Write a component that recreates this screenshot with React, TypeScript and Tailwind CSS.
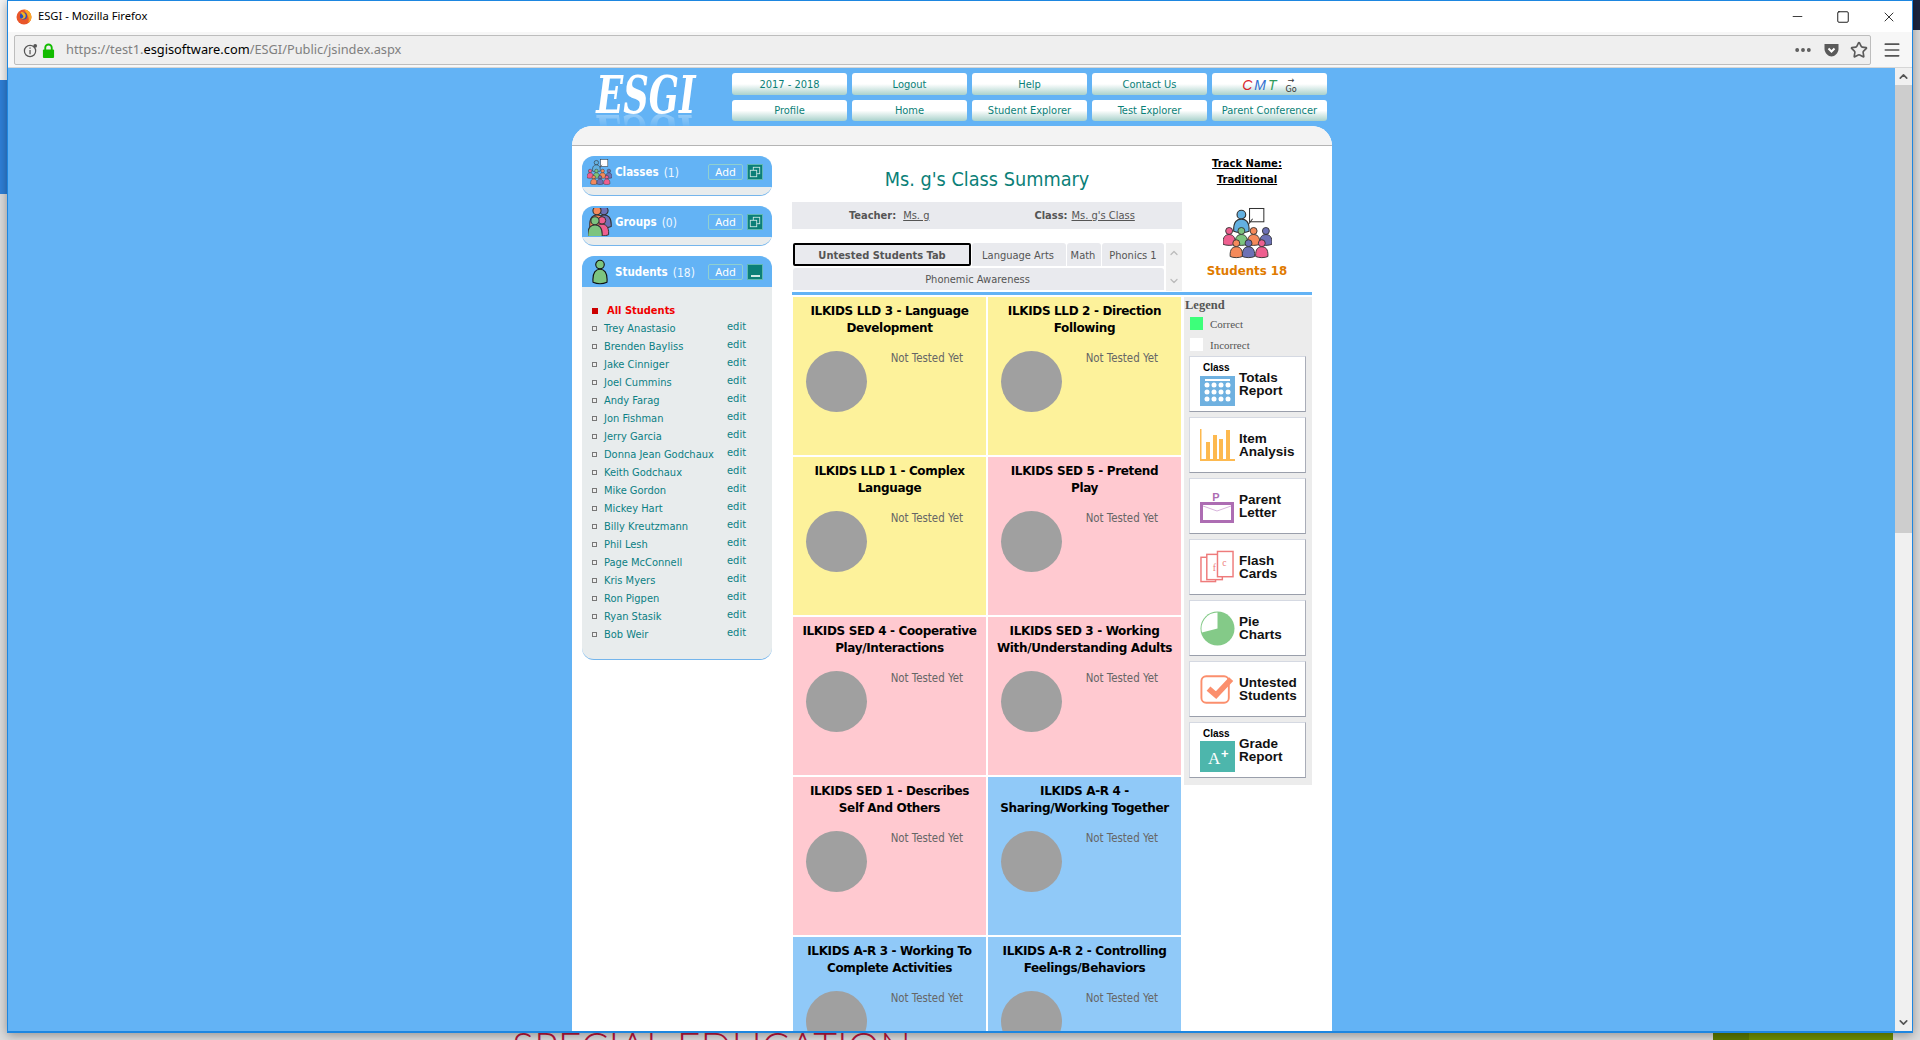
import { Minus, Square, X, MoreHorizontal, Star, Menu, ChevronUp, ChevronDown } from 'lucide-react';

const topButtons = ['2017 - 2018', 'Logout', 'Help', 'Contact Us', 'CMT', 'Profile', 'Home', 'Student Explorer', 'Test Explorer', 'Parent Conferencer'];

const students = [
  'Trey Anastasio', 'Brenden Bayliss', 'Jake Cinniger', 'Joel Cummins', 'Andy Farag', 'Jon Fishman', 'Jerry Garcia',
  'Donna Jean Godchaux', 'Keith Godchaux', 'Mike Gordon', 'Mickey Hart', 'Billy Kreutzmann', 'Phil Lesh', 'Page McConnell',
  'Kris Myers', 'Ron Pigpen', 'Ryan Stasik', 'Bob Weir',
];

const cards = [
  { title: 'ILKIDS LLD 3 - Language Development', color: 'bg-[#fdf29b]' },
  { title: 'ILKIDS LLD 2 - Direction Following', color: 'bg-[#fdf29b]' },
  { title: 'ILKIDS LLD 1 - Complex Language', color: 'bg-[#fdf29b]' },
  { title: 'ILKIDS SED 5 - Pretend\nPlay', color: 'bg-[#ffc9d0]' },
  { title: 'ILKIDS SED 4 - Cooperative Play/Interactions', color: 'bg-[#ffc9d0]' },
  { title: 'ILKIDS SED 3 - Working With/Understanding Adults', color: 'bg-[#ffc9d0]' },
  { title: 'ILKIDS SED 1 - Describes Self And Others', color: 'bg-[#ffc9d0]' },
  { title: 'ILKIDS A-R 4 - Sharing/Working Together', color: 'bg-[#90c9f8]' },
  { title: 'ILKIDS A-R 3 - Working To Complete Activities', color: 'bg-[#90c9f8]' },
  { title: 'ILKIDS A-R 2 - Controlling Feelings/Behaviors', color: 'bg-[#90c9f8]' },
];

function Person({ x, y, s = 1, fill }: { x: number; y: number; s?: number; fill: string }) {
  return (
    <g transform={`translate(${x} ${y}) scale(${s})`} fill={fill} stroke="#333" strokeWidth={0.9}>
      <circle cx={0} cy={-6} r={3.4} />
      <path d="M-6 7 C-6.5 -1 -3 -2.5 0 -2.5 C3 -2.5 6.5 -1 6 7 C3 8.5 -3 8.5 -6 7 Z" />
    </g>
  );
}

function ClassIcon({ className }: { className: string }) {
  return (
    <svg viewBox="0 0 48 50" className={className}>
      <rect x={26} y={1} width={14} height={13} fill="#fff" stroke="#333" />
      <path d="M23 19 L29 11" stroke="#333" />
      <Person x={18} y={14.5} s={1.25} fill="#63b0e0" />
      <Person x={18} y={29} fill="#7cc47f" />
      <Person x={6} y={29} fill="#ee5f8f" />
      <Person x={30} y={29} fill="#f58a5b" />
      <Person x={42} y={29} fill="#6c71b5" />
      <Person x={13} y={41} fill="#f58a5b" />
      <Person x={25} y={41} fill="#6c71b5" />
      <Person x={38} y={41} fill="#ee5f8f" />
    </svg>
  );
}

function GroupIcon({ className }: { className: string }) {
  return (
    <svg viewBox="0 0 24 28" className={className}>
      <Person x={16} y={10} s={1.2} fill="#6c71b5" />
      <Person x={9} y={10} s={1.2} fill="#f58a5b" />
      <Person x={14} y={19} s={1.1} fill="#ee5f8f" />
      <Person x={7} y={20} s={1.2} fill="#7cc47f" />
    </svg>
  );
}

function StudentIcon({ className }: { className: string }) {
  return (
    <svg viewBox="0 0 18 28" className={className}>
      <g fill="#7cc47f" stroke="#111" strokeWidth={1.2}>
        <circle cx={9} cy={6} r={4.6} />
        <path d="M1.5 25 C0.5 14 5 11 9 11 C13 11 17.5 14 16.5 25 C12 27 6 27 1.5 25 Z" />
      </g>
    </svg>
  );
}

function CopyGlyph({ open }: { open: boolean }) {
  return (
    <div className="w-[16px] h-[16px] bg-[#0b7f78] border border-[#5fb8b0] flex items-center justify-center">
      {open ? (
        <svg viewBox="0 0 14 14" className="w-[12px] h-[12px]" fill="none" stroke="#cfe9e6" strokeWidth={1}>
          <rect x={5} y={1.5} width={7.5} height={7.5} />
          <rect x={1.5} y={5} width={7.5} height={7.5} fill="#0b7f78" />
        </svg>
      ) : (
        <div className="w-[9px] h-[2px] bg-[#cfe9e6] mt-[9px]" />
      )}
    </div>
  );
}

function PanelHeader({ icon, label, count, open }: { icon: React.ReactNode; label: string; count: number; open: boolean }) {
  return (
    <div className="h-[31px] bg-[#63b3f5] rounded-t-[12px] flex items-center font-['DejaVu_Sans_Condensed','DejaVu_Sans',sans-serif]">
      <div className="w-[33px] flex justify-center pl-[2px]">{icon}</div>
      <span className="text-white font-bold text-[11.5px] pt-[2px]">{label}</span>
      <span className="text-[#eef7ff] text-[12px] ml-[5px] pt-[2px]">({count})</span>
      <div className="ml-auto mr-[9px] flex items-center gap-[4px]">
        <span className="w-[35px] h-[16px] border border-[#8fd0d0] rounded-[2px] text-white text-[11px] leading-[14px] text-center font-['Noto_Sans',sans-serif]">Add</span>
        <CopyGlyph open={open} />
      </div>
    </div>
  );
}

function ReportCard({ icon, top, label }: { icon: React.ReactNode; top?: string; label: string[] }) {
  return (
    <div className="relative w-[117px] h-[56px] bg-white border border-[#d5d9e2] border-b-[#9a9fab] border-r-[#a9adb8] flex items-center pl-[9px] gap-[4px]">
      {top && <span className="absolute left-[13px] top-[5px] text-[10px] leading-[12px] font-bold text-black font-['Liberation_Sans',sans-serif]">{top}</span>}
      <div className={`w-[36px] flex justify-center ${top ? 'mt-[13px]' : ''}`}>{icon}</div>
      <div className="text-[13.5px] leading-[12.5px] pt-[1px] font-bold text-[#111] font-['Liberation_Sans',sans-serif]">
        {label.map((l) => (
          <div key={l}>{l}</div>
        ))}
      </div>
    </div>
  );
}

function FirefoxLogo() {
  return (
    <svg viewBox="0 0 16 16" className="w-[16px] h-[16px]">
      <circle cx={8} cy={8} r={7.5} fill="#e9562a" />
      <path d="M8 .5 A7.5 7.5 0 0 1 15.5 8 A7.5 7.5 0 0 1 12 14 C14 10 12 6 8 .5Z" fill="#f9a825" />
      <circle cx={7.5} cy={7} r={3.6} fill="#2b4fb8" />
      <path d="M5 3 C8 3 10.5 5 9.5 8 C9 10 6 10.5 4.5 9.5 C7 9.5 8 8 7 6.5 C6.5 5.6 5 5 5 3Z" fill="#f7b21c" />
    </svg>
  );
}

export default function App() {
  return (
    <div className="relative w-[1920px] h-[1040px] overflow-hidden bg-[#dcdcdc]">
      {/* desktop behind the window */}
      <div className="absolute left-0 top-0 w-[7px] h-[80px] bg-[#f4f4f4]" />
      <div className="absolute left-0 top-[80px] w-[7px] h-[114px] bg-[#2f80d8]" />
      <div className="absolute left-[1912px] top-0 w-[8px] h-[30px] bg-[#1d2540]" />
      <div className="absolute left-[1713px] top-[1033px] w-[180px] h-[7px] bg-[#6f8f00]" />
      <div className="absolute left-[1713px] top-[1033px] w-[36px] h-[7px] bg-[#5c7a00]" />
      <div className="absolute left-[512px] top-[1025px] text-[#b8163c] text-[41px] leading-[44px] font-light font-['Lato',sans-serif] whitespace-nowrap">
        SPECIAL EDUCATION
      </div>

      {/* browser window */}
      <div className="absolute left-[7px] top-0 w-[1906px] h-[1033px] bg-white border-x border-t border-b-2 border-[#1d86e0] shadow-[0_2px_10px_rgba(0,0,0,0.35)] flex flex-col overflow-hidden">
        <div className="h-[31px] flex items-center pl-[8px] bg-white shrink-0">
          <FirefoxLogo />
          <span className="ml-[6px] text-[11.2px] text-black font-['Noto_Sans',sans-serif]">ESGI - Mozilla Firefox</span>
          <div className="ml-auto flex items-center text-black">
            <div className="w-[46px] flex justify-center"><Minus size={15} strokeWidth={1.2} /></div>
            <div className="w-[46px] flex justify-center"><Square size={14} strokeWidth={1.5} /></div>
            <div className="w-[46px] flex justify-center"><X size={16} strokeWidth={1.2} /></div>
          </div>
        </div>

        <div className="h-[36px] bg-[#f7f7f7] border-b border-[#d6d6d6] flex items-center pl-[6px] pr-[10px] pt-[1px] shrink-0">
          <div className="flex-1 h-[30px] bg-[#efefef] border border-[#bdbdbd] rounded-[2px] flex items-center pl-[8px] pr-[2px]">
            <svg viewBox="0 0 16 16" className="w-[15px] h-[15px]" fill="none" stroke="#555" strokeWidth={1.3}>
              <circle cx={7.5} cy={8.5} r={6} />
              <path d="M7.5 7.5 V12 M7.5 4.8 V6" />
              <circle cx={13} cy={3} r={2} fill="#555" stroke="none" />
            </svg>
            <svg viewBox="0 0 14 16" className="w-[13px] h-[15px] ml-[4px]" fill="none">
              <path d="M3.5 8 V5 A3.5 3.5 0 0 1 10.5 5 V8" stroke="#12bc00" strokeWidth={2} />
              <rect x={1} y={7} width={12} height={9} rx={1} fill="#12bc00" />
            </svg>
            <span className="ml-[11px] text-[12.8px] text-[#808080] font-['Noto_Sans',sans-serif]">
              https://test1.<span className="text-black">esgisoftware.com</span>/ESGI/Public/jsindex.aspx
            </span>
            <div className="ml-auto flex items-center gap-[10px] text-[#5a5a5a]">
              <MoreHorizontal size={20} strokeWidth={2.6} />
              <svg viewBox="0 0 16 16" className="w-[17px] h-[16px]"><path d="M1 2 H15 V7 C15 11 11 14.5 8 14.5 C5 14.5 1 11 1 7 Z" fill="#5a5a5a" /><path d="M5 6.5 L8 9.5 L11 6.5" stroke="#fff" strokeWidth={2} fill="none" /></svg>
              <Star size={18} strokeWidth={2.2} />
            </div>
          </div>
          <Menu size={20} strokeWidth={2} className="ml-[11px] text-[#555]" />
        </div>

        <div className="flex-1 flex min-h-0">
          {/* page */}
          <div className="flex-1 bg-[#63b3f5] overflow-hidden font-['DejaVu_Sans',sans-serif]">
            <div className="w-[760px] ml-[564px]">
              {/* header */}
              <div className="h-[58px] flex">
                <div className="w-[160px] flex justify-center pr-[12px]">
                  <span className="block h-[48px] text-white text-[52px] leading-[48px] mt-[3px] italic font-bold scale-x-[0.68] font-['DejaVu_Serif',serif] [-webkit-box-reflect:below_-10px_linear-gradient(transparent_60%,rgba(255,255,255,0.45))]">ESGI</span>
                </div>
                <div className="grid grid-cols-5 gap-x-[5px] gap-y-[5px] w-[595px] mt-[5px] h-[48px]">
                  {topButtons.map((b) => (
                    <div key={b} className="rounded-[3px] pt-[2px] bg-gradient-to-b from-white via-white to-[#a9d2cc] flex items-center justify-center text-[11px] text-[#0b7f78] font-['DejaVu_Sans_Condensed','DejaVu_Sans',sans-serif]">
                      {b === 'CMT' ? (
                        <span className="flex items-center gap-[7px]">
                          <span className="italic text-[14px] leading-none tracking-[2px] font-['Liberation_Sans',sans-serif]">
                            <span className="text-[#d8232a]">C</span><span className="text-[#2f6fd0]">M</span><span className="text-[#2e9b5b]">T</span>
                          </span>
                          <span className="text-[#333] text-[9px] leading-[9px] text-center">→<br />Go</span>
                        </span>
                      ) : b}
                    </div>
                  ))}
                </div>
              </div>

              {/* main sheet */}
              <div className="relative bg-white rounded-t-[20px] h-[910px] overflow-hidden">
                <div className="h-[20px] bg-[#f3f3f3] border-b border-[#b4b4b4]" />
                <div className="flex">
                  {/* left column */}
                  <div className="w-[190px] ml-[10px] mt-[10px] flex flex-col gap-[10px]">
                    <div className="h-[40px] bg-[#e8eced] rounded-[12px] border-b border-[#74b5ec]">
                      <PanelHeader icon={<ClassIcon className="w-[25px] h-[26px]" />} label="Classes" count={1} open />
                    </div>
                    <div className="h-[40px] bg-[#e8eced] rounded-[12px] border-b border-[#74b5ec]">
                      <PanelHeader icon={<GroupIcon className="w-[24px] h-[28px]" />} label="Groups" count={0} open />
                    </div>
                    <div className="bg-[#e8eced] rounded-[12px] border-b border-[#74b5ec] h-[404px]">
                      <PanelHeader icon={<StudentIcon className="w-[18px] h-[26px]" />} label="Students" count={18} open={false} />
                      <div className="pl-[10px] pt-[15px]">
                        <div className="flex items-center h-[18px] text-[11px] font-bold text-[#f00000] font-['DejaVu_Sans_Condensed','DejaVu_Sans',sans-serif]">
                          <span className="w-[6px] h-[6px] bg-[#cc0000] mr-[9px]" />All Students
                        </div>
                        {students.map((s) => (
                          <div key={s} className="flex h-[18px] text-[11px] text-[#0b7f84] font-['DejaVu_Sans_Condensed','DejaVu_Sans',sans-serif]">
                            <span className="w-[5px] h-[5px] border border-[#777] bg-[#eee] mr-[7px] mt-[6px] shrink-0" />
                            <span className="w-[123px] whitespace-nowrap leading-[17px]">{s}</span>
                            <span className="leading-[14px]">edit</span>
                          </div>
                        ))}
                      </div>
                    </div>
                  </div>

                  <div className="w-[520px] ml-[20px]">
                    <div className="flex h-[146px]">
                      {/* centre heading and tabs */}
                      <div className="w-[390px]">
                        <div className="h-[56px] flex items-end justify-center pb-[9px] text-[19.7px] leading-[26px] text-[#0b7f78] font-['DejaVu_Sans_Condensed','DejaVu_Sans',sans-serif]">Ms. g's Class Summary</div>
                        <div className="h-[27px] pt-[1px] bg-[#e9eaee] flex items-center text-[11px] text-[#555] font-['DejaVu_Sans_Condensed','DejaVu_Sans',sans-serif]">
                          <span className="font-bold ml-[57px]">Teacher:</span>
                          <span className="underline ml-[7px]">Ms. g</span>
                          <span className="font-bold ml-[105px]">Class:</span>
                          <span className="underline ml-[4px]">Ms. g's Class</span>
                        </div>
                        <div className="flex mt-[14px] ml-[1px] h-[48px]">
                          <div className="w-[371px] text-[11px] text-[#555] font-['DejaVu_Sans_Condensed','DejaVu_Sans',sans-serif]">
                            <div className="flex gap-[1px] h-[23px]">
                              <div className="w-[178px] pt-[3px] bg-[#e9eaee] border-2 border-black rounded-[2px] flex items-center justify-center font-bold">Untested Students Tab</div>
                              <div className="w-[94px] pt-[3px] pr-[2px] bg-[#e9eaee] rounded-t-[3px] flex items-center justify-center">Language Arts</div>
                              <div className="w-[34px] pt-[3px] pr-[2px] bg-[#e9eaee] rounded-t-[3px] flex items-center justify-center">Math</div>
                              <div className="w-[62px] pt-[3px] bg-[#e9eaee] rounded-t-[3px] flex items-center justify-center">Phonics 1</div>
                            </div>
                            <div className="h-[22px] mt-[2px] pt-[3px] pr-[2px] bg-[#e9eaee] rounded-t-[3px] flex items-center justify-center">Phonemic Awareness</div>
                          </div>
                          <div className="w-[16px] ml-[2px] bg-[#f0f0f0] flex flex-col justify-between items-center py-[4px] text-[#bbb]">
                            <ChevronUp size={12} strokeWidth={2.5} />
                            <ChevronDown size={12} strokeWidth={2.5} />
                          </div>
                        </div>
                      </div>

                      {/* track name column */}
                      <div className="w-[130px] flex flex-col items-center">
                        <div className="mt-[10px] text-[10px] leading-[16px] font-bold underline text-black text-center">Track Name:<br />Traditional</div>
                        <ClassIcon className="w-[49px] h-[52px] mt-[19px]" />
                        <div className="mt-[4px] text-[11.8px] font-bold text-[#e07b00]">Students 18</div>
                      </div>
                    </div>

                    <div className="h-[3px] bg-[#63b3f5]" />
                    <div className="flex mt-[2px]">
                      <div className="w-[388px] ml-[1px] grid grid-cols-2 gap-[2px] auto-rows-[158px] h-[800px]">
                        {cards.map((c) => (
                          <div key={c.title} className={`${c.color} relative pt-[6px] px-[3px]`}>
                            <div className="text-[12px] leading-[17px] font-bold text-black text-center tracking-[-0.35px] whitespace-pre-line">{c.title}</div>
                            <div className="absolute left-[13px] top-[54px] w-[61px] h-[61px] rounded-full bg-[#a0a0a0]" />
                            <div className="absolute right-[23px] top-[53px] text-[11.4px] leading-[16px] text-[#666] font-['DejaVu_Sans_Condensed','DejaVu_Sans',sans-serif]">Not Tested Yet</div>
                          </div>
                        ))}
                      </div>
                      <div className="w-[128px] ml-[3px] h-[488px] bg-[#ececec] pl-[5px] font-['Liberation_Serif',serif]">
                        <div className="text-[12.5px] leading-[16px] font-bold text-[#555] -ml-[4px]">Legend</div>
                        <div className="flex items-center h-[13px] mt-[4px] ml-[1px] text-[11px] text-[#555]"><span className="w-[13px] h-[13px] bg-[#3dff7a] mr-[7px]" /><span className="pt-[2px]">Correct</span></div>
                        <div className="flex items-center h-[13px] mt-[8px] ml-[1px] text-[11px] text-[#555]"><span className="w-[13px] h-[13px] bg-white mr-[7px]" /><span className="pt-[1px]">Incorrect</span></div>
                        <div className="flex flex-col gap-[5px] mt-[5px]">
                          <ReportCard top="Class" label={['Totals', 'Report']} icon={
                            <svg viewBox="0 0 35 30" className="w-[35px] h-[30px]">
                              <rect width={35} height={30} fill="#6fb1e0" />
                              {[7, 14, 21].map((y) => [7, 14, 21, 28].map((x) => <circle key={`${x}${y}`} cx={x} cy={y + 2} r={2.5} fill="#fff" />))}
                              <rect x={5} y={3} width={25} height={2} fill="#fff" />
                            </svg>
                          } />
                          <ReportCard label={['Item', 'Analysis']} icon={
                            <svg viewBox="0 0 35 32" className="w-[35px] h-[32px]" fill="#fdb94f">
                              <path d="M0 0 H1.5 V30 H35 V32 H0 Z" />
                              <rect x={6} y={13} width={4} height={17} /><rect x={13} y={6} width={4} height={24} /><rect x={19} y={10} width={4} height={20} /><rect x={26} y={1} width={4} height={29} />
                            </svg>
                          } />
                          <ReportCard label={['Parent', 'Letter']} icon={
                            <svg viewBox="0 0 35 33" className="w-[35px] h-[33px]">
                              <text x={16} y={11} fontSize={11} fontWeight={700} fontFamily="Liberation Sans" fill="#ad6db3" textAnchor="middle">P</text>
                              <rect x={1.5} y={13.5} width={31} height={18} fill="#fff" stroke="#ad6db3" strokeWidth={3} />
                              <path d="M3 16 L17 21 L31 16" fill="none" stroke="#d8b4dc" />
                            </svg>
                          } />
                          <ReportCard label={['Flash', 'Cards']} icon={
                            <svg viewBox="0 0 35 34" className="w-[34px] h-[34px]" fill="#fff" stroke="#ee7b7b" strokeWidth={1.5}>
                              <rect x={1} y={7} width={15} height={25} />
                              <rect x={7} y={4} width={16} height={26} />
                              <rect x={18} y={1} width={16} height={26} />
                              <text x={13} y={21} fontSize={10} stroke="none" fill="#ee7b7b" fontFamily="Liberation Serif">f</text>
                              <text x={23} y={16} fontSize={10} stroke="none" fill="#ee7b7b" fontFamily="Liberation Serif">c</text>
                            </svg>
                          } />
                          <ReportCard label={['Pie', 'Charts']} icon={
                            <svg viewBox="0 0 36 36" className="w-[35px] h-[35px]">
                              <circle cx={18} cy={18} r={17.5} fill="#84ca88" />
                              <path d="M18 18 L18 1.5 A16.5 16.5 0 0 0 2 22 Z" fill="#fff" />
                            </svg>
                          } />
                          <ReportCard label={['Untested', 'Students']} icon={
                            <svg viewBox="0 0 36 32" className="w-[34px] h-[31px]" fill="none">
                              <rect x={1.5} y={2} width={29} height={28} rx={5} stroke="#fb8f6d" strokeWidth={2} />
                              <path d="M9 15 L17 22 L33 5" stroke="#fb8f6d" strokeWidth={6} />
                            </svg>
                          } />
                          <ReportCard top="Class" label={['Grade', 'Report']} icon={
                            <svg viewBox="0 0 35 31" className="w-[35px] h-[31px]">
                              <rect width={35} height={31} fill="#4db6ac" />
                              <text x={8} y={23} fontSize={17} fill="#fff" fontFamily="Liberation Serif">A</text>
                              <text x={21} y={17} fontSize={13} fontWeight={700} fill="#fff" fontFamily="Liberation Sans">+</text>
                            </svg>
                          } />
                        </div>
                      </div>
                    </div>
                  </div>
                </div>
              </div>
            </div>
          </div>

          {/* page scrollbar */}
          <div className="w-[17px] bg-[#f0f0f0] flex flex-col items-center shrink-0">
            <div className="h-[17px] flex items-center justify-center text-[#555]"><ChevronUp size={13} strokeWidth={3} /></div>
            <div className="w-full h-[448px] bg-[#cdcdcd]" />
            <div className="mt-auto h-[17px] flex items-center justify-center text-[#555]"><ChevronDown size={13} strokeWidth={3} /></div>
          </div>
        </div>
      </div>
    </div>
  );
}
